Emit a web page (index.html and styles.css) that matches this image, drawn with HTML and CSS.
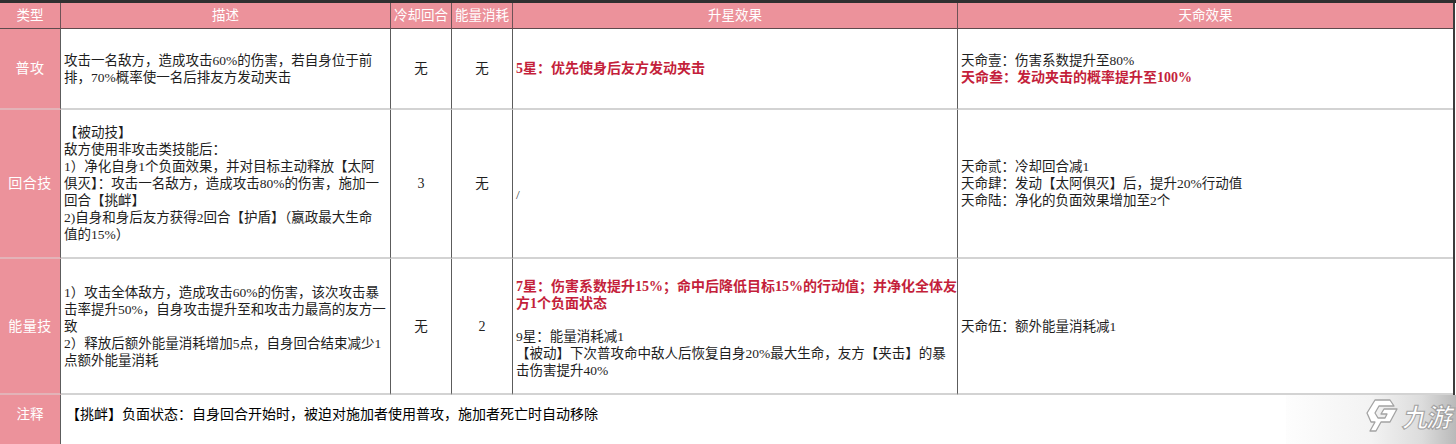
FILE: index.html
```html
<!DOCTYPE html>
<html lang="zh-CN">
<head>
<meta charset="utf-8">
<title>技能表</title>
<link rel="stylesheet" href="styles.css">
</head>
<body>
<div class="page">
  <div class="topbar"></div>
  <div class="table">
    <div class="c h">类型</div>
    <div class="c h">描述</div>
    <div class="c h">冷却回合</div>
    <div class="c h">能量消耗</div>
    <div class="c h">升星效果</div>
    <div class="c h last">天命效果</div>

    <div class="c type">普攻</div>
    <div class="c desc"><div>攻击一名敌方，造成攻击60%的伤害，若自身位于前<br>排，70%概率使一名后排友方发动夹击</div></div>
    <div class="c num">无</div>
    <div class="c num">无</div>
    <div class="c desc"><div class="red">5星：优先使身后友方发动夹击</div></div>
    <div class="c desc last"><div>天命壹：伤害系数提升至80%<div class="red">天命叁：发动夹击的概率提升至100%</div></div></div>

    <div class="c type">回合技</div>
    <div class="c desc"><div>【被动技】<br>敌方使用非攻击类技能后：<br>1）净化自身1个负面效果，并对目标主动释放【太阿<br>俱灭】：攻击一名敌方，造成攻击80%的伤害，施加一<br>回合【挑衅】<br>2)自身和身后友方获得2回合【护盾】（嬴政最大生命<br>值的15%）</div></div>
    <div class="c num"><span class="dark">3</span></div>
    <div class="c num">无</div>
    <div class="c desc"><div class="slash">/</div></div>
    <div class="c desc last"><div>天命贰：冷却回合减1<br>天命肆：发动【太阿俱灭】后，提升20%行动值<br>天命陆：净化的负面效果增加至2个</div></div>

    <div class="c type">能量技</div>
    <div class="c desc"><div>1）攻击全体敌方，造成攻击60%的伤害，该次攻击暴<br>击率提升50%，自身攻击提升至和攻击力最高的友方一<br>致<br>2）释放后额外能量消耗增加5点，自身回合结束减少1<br>点额外能量消耗</div></div>
    <div class="c num">无</div>
    <div class="c num"><span class="dark">2</span></div>
    <div class="c desc">
      <div class="stack">
        <div class="red">7星：伤害系数提升15%；命中后降低目标15%的行动值；并净化全体友<br>方1个负面状态</div>
        <div class="gap"></div>
        <div>9星：能量消耗减1<br>【被动】下次普攻命中敌人后恢复自身20%最大生命，友方【夹击】的暴<br>击伤害提升40%</div>
      </div>
    </div>
    <div class="c desc last"><div>天命伍：额外能量消耗减1</div></div>
  </div>

  <div class="note">
    <div class="note-type">注释</div>
    <div class="note-text">【挑衅】负面状态：自身回合开始时，被迫对施加者使用普攻，施加者死亡时自动移除</div>
    <div class="watermark">
      <svg class="logo" width="92" height="40" viewBox="0 0 92 40">
        <path d="M9 2 L24 2 L28 8 L13 8 L9 15 L12 20 L19 20 L21 16 L15 16 L18 11 L31 11 L24 24 L15 24 L10 33 L4 33 L9 24 L5 24 L1 15 Z" fill="#fff" stroke="#a3a3a3" stroke-width="1.3" stroke-linejoin="round"/>
        <text x="36" y="29" class="logo-text" transform="skewX(-12) translate(6,0)">九游</text>
      </svg>
    </div>
  </div>
</div>
</body>
</html>
```

FILE: styles.css
```css
html, body {
  margin: 0;
  padding: 0;
  background: #ffffff;
}

body {
  width: 1456px;
  height: 444px;
  overflow: hidden;
  font-family: "Liberation Serif", "Noto Sans CJK SC", serif;
  color: #1c1c1c;
}

.page {
  width: 1456px;
}

.topbar {
  height: 3px;
  background: #2f2f2f;
}

.table {
  display: grid;
  grid-template-columns: 61px 330px 61px 61px 445px 495px;
  grid-template-rows: 26px 81px 149px 136px;
  width: 1453px;
  border-right: 2px solid #3c3c3c;
}

.c {
  box-sizing: border-box;
  border-right: 1px solid #5c5c5c;
  border-bottom: 2px solid #d3d3d3;
  display: flex;
  align-items: center;
  font-size: 13.5px;
  line-height: 17px;
  color: #1e1e1e;
  min-width: 0;
}

.c.last {
  border-right: none;
}

.h {
  background: #ec929b;
  color: #ffffff;
  justify-content: center;
  border-right-color: #6e5256;
  border-bottom: 1px solid #5e4a4d;
  font-size: 13.5px;
}

.type {
  background: #ec929b;
  color: #ffffff;
  justify-content: center;
  font-size: 14px;
  letter-spacing: 0.5px;
  border-bottom-color: #e3b3b8;
}

.desc {
  padding-left: 3px;
  white-space: nowrap;
}

.num {
  justify-content: center;
  color: #1e1e1e;
}

.dark {
  color: #222222;
  font-size: 14px;
}

.red {
  color: #c41f3b;
  font-weight: bold;
  font-size: 14px;
}

.slash {
  padding-top: 22px;
  color: #444444;
}

.stack {
  display: flex;
  flex-direction: column;
  padding-top: 4px;
}

.gap {
  height: 16px;
}

.note {
  position: relative;
  display: flex;
  height: 49px;
}

.note-type {
  box-sizing: border-box;
  width: 61px;
  flex: none;
  background: #ec929b;
  color: #ffffff;
  border-right: 1px solid #5c5c5c;
  padding-top: 11px;
  text-align: center;
  font-size: 13.5px;
  line-height: 17px;
}

.note-text {
  padding: 11px 0 0 5px;
  font-size: 14px;
  line-height: 17px;
  color: #000000;
  font-weight: 400;
  white-space: nowrap;
}

.watermark {
  position: absolute;
  left: 1286px;
  top: 0;
  right: 0;
  bottom: 0;
  background: linear-gradient(90deg, #fdfdfd 0%, #f3f3f3 50%, #dcdcdc 80%, #b9b9b9 100%);
}

.logo {
  position: absolute;
  left: 80px;
  top: 3px;
}

.logo-text {
  font-family: "Noto Sans CJK SC", sans-serif;
  font-weight: bold;
  font-size: 26px;
  fill: #ffffff;
  stroke: #a3a3a3;
  stroke-width: 1.1;
  letter-spacing: -2px;
}
```
